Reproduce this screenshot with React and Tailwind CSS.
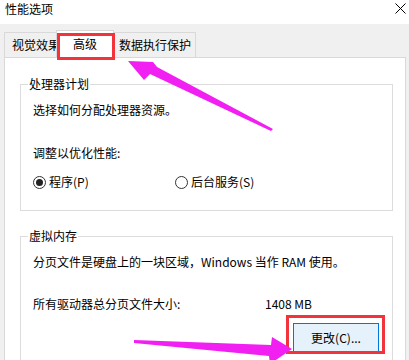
import React from 'react';

const font = { fontFamily: '"Noto Sans CJK SC", "Noto Sans", sans-serif' };

const GroupBox = ({ title, children, className = '' }) => (
  <fieldset className={`border border-[#dcdcdc] ml-[15px] mr-[12px] ${className}`}>
    <legend className="ml-[7px] px-[1px] text-[12px] leading-[16px]">{title}</legend>
    {children}
  </fieldset>
);

const Radio = ({ checked, label }) => (
  <label className="flex items-center gap-[3px] text-[12px] leading-[16px]">
    <span className="w-[13px] h-[13px] rounded-full border border-[#333] flex items-center justify-center bg-white">
      {checked && <span className="w-[7px] h-[7px] rounded-full bg-[#222]" />}
    </span>
    <span>{label}</span>
  </label>
);

export default function App() {
  return (
    <div className="relative w-[409px] h-[360px] overflow-hidden bg-[#f0f0f0] text-black" style={font}>
      {/* title bar */}
      <div className="h-[24px] bg-white flex justify-between">
        <div className="pl-[5px] pt-[1px] text-[12px] leading-[16px]">性能选项</div>
        <svg width="11" height="11" viewBox="0 0 11 11" className="mt-[3px] mr-[3px]">
          <path d="M0.5 0.5 L10.5 10.5 M10.5 0.5 L0.5 10.5" stroke="#000" strokeWidth="1" />
        </svg>
      </div>

      <div className="pt-[8px]">
        {/* tabs */}
        <div className="flex items-end pl-[4px] h-[25px]">
          <div className="w-[58px] h-[25px] border border-b-0 border-[#d9d9d9] bg-[#f0f0f0] overflow-hidden whitespace-nowrap pl-[7px] text-[12px] leading-[24px]">
            视觉效果
          </div>
          <div className="relative z-10 -ml-[6px] w-[58px] h-[28px] -mb-[1px] border border-b-0 border-[#d9d9d9] bg-white text-center text-[12px] leading-[26px]">
            高级
          </div>
          <div className="-ml-[2px] w-[84px] h-[25px] border border-b-0 border-[#d9d9d9] bg-[#f0f0f0] text-center text-[12px] leading-[24px] pl-[2px]">
            数据执行保护
          </div>
        </div>

        {/* panel */}
        <div className="ml-[4px] mr-[3px] h-[320px] border border-[#d9d9d9] bg-white pt-[18px]">
          <GroupBox title="处理器计划">
            <div className="px-[12px] pt-[10px] pb-[20px]">
              <div className="text-[12px] leading-[16px]">选择如何分配处理器资源。</div>
              <div className="mt-[27px] text-[12px] leading-[16px]">调整以优化性能:</div>
              <div className="mt-[13px] flex">
                <div className="w-[142px]">
                  <Radio checked label="程序(P)" />
                </div>
                <Radio label="后台服务(S)" />
              </div>
            </div>
          </GroupBox>

          <GroupBox title="虚拟内存" className="mt-[17px]">
            <div className="px-[12px] pt-[10px] pb-[20px]">
              <div className="text-[12px] leading-[16px] whitespace-nowrap">
                分页文件是硬盘上的一块区域，Windows 当作 RAM 使用。
              </div>
              <div className="mt-[26px] flex text-[12px] leading-[16px]">
                <div className="w-[232px]">所有驱动器总分页文件大小:</div>
                <div>1408 MB</div>
              </div>
              <div className="mt-[11px] flex justify-end pr-[1px]">
                <button className="w-[86px] h-[29px] border border-[#0078d7] bg-[#e5f1fb] text-[12px] leading-[16px]">
                  更改(C)...
                </button>
              </div>
            </div>
          </GroupBox>
        </div>
      </div>

      {/* annotations */}
      <div className="absolute left-[57px] top-[33px] w-[58px] h-[27px] border-[3px] border-[#f2333b] z-20" />
      <div className="absolute left-[286px] top-[315px] w-[99px] h-[39px] border-[3px] border-[#f2333b] z-20" />
      <svg className="absolute inset-0 z-30 pointer-events-none" width="409" height="360" viewBox="0 0 409 360">
        <polygon points="128,61 153,62 157,67 273,129 271,131 150,74 144,80" fill="#f11ff1" />
        <polygon points="134,340 271,345 272,337 292,349 270,364 269,356 134,343" fill="#f11ff1" />
      </svg>
    </div>
  );
}
